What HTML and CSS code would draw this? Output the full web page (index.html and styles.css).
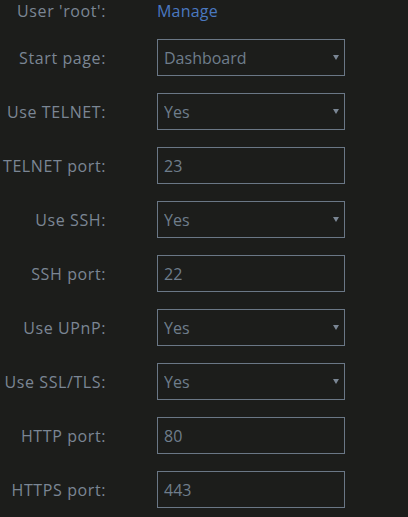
FILE: index.html
```html
<!DOCTYPE html>
<html lang="en">
<head>
    <meta charset="UTF-8">
    <meta name="viewport" content="width=device-width, initial-scale=1.0">
    <title>Settings</title>
    <link rel="stylesheet" href="styles.css">
</head>
<body>
<form class="settings">
    <label class="label">User 'root':</label>
    <div class="value"><a class="link" href="#">Manage</a></div>

    <label class="label" for="startPage">Start page:</label>
    <div class="select-wrap">
        <select id="startPage" class="field">
            <option>Dashboard</option>
        </select>
    </div>

    <label class="label" for="useTelnet">Use TELNET:</label>
    <div class="select-wrap">
        <select id="useTelnet" class="field"><option>Yes</option><option>No</option></select>
    </div>

    <label class="label" for="telnetPort">TELNET port:</label>
    <input id="telnetPort" class="field" type="text" value="23">

    <label class="label" for="useSsh">Use SSH:</label>
    <div class="select-wrap">
        <select id="useSsh" class="field"><option>Yes</option><option>No</option></select>
    </div>

    <label class="label" for="sshPort">SSH port:</label>
    <input id="sshPort" class="field" type="text" value="22">

    <label class="label" for="useUpnp">Use UPnP:</label>
    <div class="select-wrap">
        <select id="useUpnp" class="field"><option>Yes</option><option>No</option></select>
    </div>

    <label class="label" for="useSsl">Use SSL/TLS:</label>
    <div class="select-wrap">
        <select id="useSsl" class="field"><option>Yes</option><option>No</option></select>
    </div>

    <label class="label" for="httpPort">HTTP port:</label>
    <input id="httpPort" class="field" type="text" value="80">

    <label class="label" for="httpsPort">HTTPS port:</label>
    <input id="httpsPort" class="field" type="text" value="443">
</form>
</body>
</html>
```

FILE: styles.css
```css
body {
    margin: 0;
    background-color: #1c1d1b;
    font-family: 'Open Sans', sans-serif;
    font-size: 16px;
    color: #7f8a96;
}
.settings {
    display: grid;
    grid-template-columns: 106px 188px;
    grid-template-rows: 22px;
    grid-auto-rows: 37px;
    column-gap: 51px;
    row-gap: 17px;
    align-items: center;
}
.label {
    text-align: right;
    color: #7b8694;
    letter-spacing: 0.6px;
    white-space: nowrap;
}
.link {
    color: #4a78c0;
    text-decoration: none;
    letter-spacing: 0.2px;
}
.select-wrap {
    position: relative;
    height: 37px;
}
.select-wrap::after {
    content: '';
    position: absolute;
    right: 6px;
    top: 16px;
    border-left: 3px solid transparent;
    border-right: 3px solid transparent;
    border-top: 5px solid #7a8694;
    pointer-events: none;
}
.field {
    box-sizing: border-box;
    width: 188px;
    height: 37px;
    margin: 0;
    padding: 0 6px;
    background-color: #1c1d1b;
    border: 1px solid #6a7786;
    border-radius: 0;
    color: #6f7d8c;
    font-family: 'Open Sans', sans-serif;
    font-size: 16px;
    appearance: none;
    outline: none;
}
```
